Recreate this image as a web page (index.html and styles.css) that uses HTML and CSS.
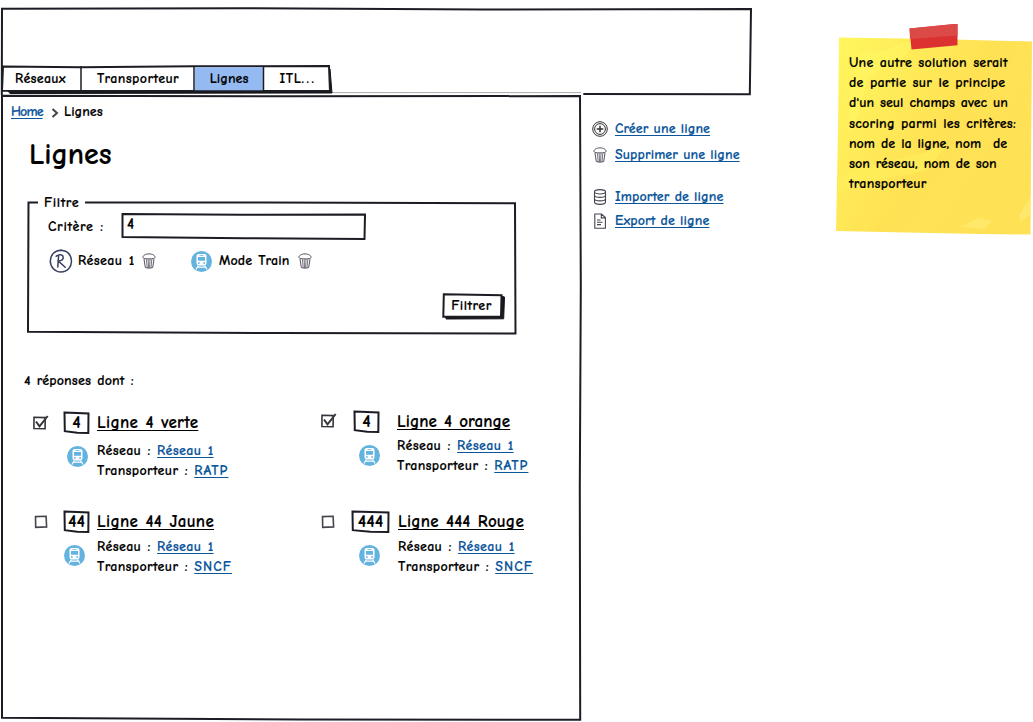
FILE: index.html
```html
<!DOCTYPE html>
<html lang="fr">
<head>
<meta charset="utf-8">
<title>Lignes</title>
<link rel="stylesheet" href="styles.css">
</head>
<body>
<svg class="defs" aria-hidden="true">
  <symbol id="train" viewBox="0 0 21 21">
    <circle cx="10.5" cy="10.5" r="10.5" fill="#64b3df"/>
    <path d="M8 3h5c1.800 0 2.500 .8 2.500 2.300v6.700c0 1.600-.9 2.400-2.500 2.400H8c-1.600 0-2.500-.8-2.500-2.400V5.300C5.500 3.800 6.300 3 8 3z" fill="#fff"/>
    <path d="M7 6.100h7v3.700H7zM7 11.200h1.700v1.500H7zM12.300 11.200H14v1.500h-1.700zM8.500 4.200h4v.8h-4z" fill="#64b3df"/>
    <path d="M7.300 14.500l-2.300 4M13.700 14.500l2.300 4M6.800 16.200h7.400" fill="none" stroke="#fff" stroke-width="1.200"/>
  </symbol>
  <symbol id="trash" viewBox="0 0 14 16">
    <g fill="none" stroke="#55505f" stroke-width="1">
      <path d="M1 4.600C.6 2.500 3.500.9 7 .9s6.300 1.500 6 3.600c-.1 1-2.600 1.400-6 1.400s-5.800-.4-6-1.300z"/>
      <path d="M2 6l1.300 8.500c2 .8 5.500.8 7.400 0L12 6"/>
      <path d="M4.400 6.200l.8 8.500M6.200 6.200l.3 8.700M8 6.200l-.4 8.700M9.800 6.200L9 14.600" stroke-width=".8"/>
    </g>
  </symbol>
  <symbol id="reseau" viewBox="0 0 24 24">
    <g fill="none" stroke="#39405f" stroke-width="1.500" stroke-linecap="round">
      <path d="M13 1.200C6 .8 1.500 5.500 1.300 12c0 6 4.500 11 10.700 11 6.400 0 10.600-5 10.500-11C22.400 6 18.500 1.300 11 1.300"/>
      <path d="M9.600 6.500L8.800 18M7.200 7.300c2.600-2.500 6.900-2.200 7 1 .1 2.400-2.300 3.500-4.800 3.700l6.800 6.200"/>
    </g>
  </symbol>
  <symbol id="checked" viewBox="0 0 17 17">
    <g fill="none" stroke="#35353b" stroke-width="1.600">
      <path d="M2 3.300l11.200.3-.1 11.200-11.200-.3z"/>
      <path d="M4 7.500l3.500 4.800L15.700 2" stroke-width="2"/>
    </g>
  </symbol>
  <symbol id="unchecked" viewBox="0 0 17 17">
    <path d="M2.500 2.600l10.600-.3.500 10.600-10.900.4z" fill="none" stroke="#45454d" stroke-width="1.600"/>
  </symbol>
</svg>

<div class="screen">
  <div class="app">
    <header class="banner">
      <svg class="frame" viewBox="0 0 753 90" preserveAspectRatio="none"><path d="M1.800 87L2 .7l240-.4 240 1.200 269-.4-1.200 85.200-166.500-.2"/><path d="M332 84.600h249" class="faint"/></svg>
      <nav class="tabs">
        <svg class="frame" viewBox="0 0 333 30" preserveAspectRatio="none"><path class="solid" d="M8 26h320l-2-23 4 1 2 24-322 .5z"/><path d="M3 1.500l78 .7 113-1 135-.1 1 25-328-.4z" fill="#fff"/><path d="M195 2.200h68v23h-68z" class="active"/><path class="divider" d="M81 1v27M194 1v27M263.500 1v27"/></svg>
        <a class="tab t1">Réseaux</a><a class="tab t2">Transporteur</a><a class="tab t3">Lignes</a><a class="tab t4">ITL<span class="dots">...</span></a>
      </nav>
    </header>
    <div class="columns">
      <main class="panel">
        <svg class="frame" viewBox="0 0 582 626" preserveAspectRatio="none"><path d="M2 -.3l290 .5 288-.1.8 190-1 200 .4 233.700L300 623.500l-298-1.800z"/></svg>
        <div class="crumbs"><a class="link home">Home</a><svg class="chevron" viewBox="0 0 8 10"><path d="M1.500 1l4.500 4-4.500 4"/></svg><span class="here">Lignes</span></div>
        <h1>Lignes</h1>
        <section class="filter">
          <svg class="frame" viewBox="0 0 490 132" preserveAspectRatio="none"><path d="M11 .6H1.500L1 129.800l250 1.200 237.500.6-.5-130.300-250-.7-180-.2"/></svg>
          <div class="legend">Filtre</div>
          <div class="criteria"><span class="label">Critère :</span>
            <div class="input"><svg class="frame" viewBox="0 0 246 27" preserveAspectRatio="none"><path d="M1.500 1l120 .8 122.500-.3-.5 24.500-120-.8L1.500 24z"/></svg>4</div>
          </div>
          <div class="tags">
            <svg class="ico-r"><use href="#reseau"/></svg><span class="tag1">Réseau 1</span><svg class="ico-trash"><use href="#trash"/></svg>
            <svg class="ico-train mode"><use href="#train"/></svg><span class="tag2">Mode Train</span><svg class="ico-trash"><use href="#trash"/></svg>
          </div>
          <div class="button"><svg class="frame" viewBox="0 0 64 27" preserveAspectRatio="none"><path class="solid" d="M4 22h55V3l3.500 1-.8 21.800L4 26z"/><path d="M1.800 1.300l57.700 1-.5 21.300-57.700.2z" fill="#fff"/></svg>Filtrer</div>
        </section>
        <p class="count">4 réponses dont :</p>
        <div class="results">
          <article class="item a">
            <svg class="check"><use href="#checked"/></svg>
            <div class="side"><div class="num"><svg class="frame" viewBox="0 0 27 23" preserveAspectRatio="none"><path d="M1.500 1.500l24 1-.2 19.500-11-.3-12.500-1.500z"/></svg>4</div><svg class="ico-train"><use href="#train"/></svg></div>
            <div class="info"><h2><a>Ligne 4 verte</a></h2><p>Réseau : <a class="link">Réseau 1</a></p><p>Transporteur : <a class="link op">RATP</a></p></div>
          </article>
          <article class="item b">
            <svg class="check"><use href="#checked"/></svg>
            <div class="side"><div class="num"><svg class="frame" viewBox="0 0 27 23" preserveAspectRatio="none"><path d="M1.500 1.500l24 1-.2 19.500-11-.3-12.500-1.500z"/></svg>4</div><svg class="ico-train"><use href="#train"/></svg></div>
            <div class="info"><h2><a>Ligne 4 orange</a></h2><p>Réseau : <a class="link">Réseau 1</a></p><p>Transporteur : <a class="link op">RATP</a></p></div>
          </article>
          <article class="item c">
            <svg class="check"><use href="#unchecked"/></svg>
            <div class="side"><div class="num"><svg class="frame" viewBox="0 0 27 23" preserveAspectRatio="none"><path d="M1.500 1.500l24 1-.2 19.500-11-.3-12.500-1.500z"/></svg>44</div><svg class="ico-train"><use href="#train"/></svg></div>
            <div class="info"><h2><a>Ligne 44 Jaune</a></h2><p>Réseau : <a class="link">Réseau 1</a></p><p>Transporteur : <a class="link op">SNCF</a></p></div>
          </article>
          <article class="item d">
            <svg class="check"><use href="#unchecked"/></svg>
            <div class="side"><div class="num wide"><svg class="frame" viewBox="0 0 39 23" preserveAspectRatio="none"><path d="M1.500 1.500l36 1-.2 19.500-18-.3-17.500-1.500z"/></svg>444</div><svg class="ico-train"><use href="#train"/></svg></div>
            <div class="info"><h2><a>Ligne 444 Rouge</a></h2><p>Réseau : <a class="link">Réseau 1</a></p><p>Transporteur : <a class="link op">SNCF</a></p></div>
          </article>
        </div>
      </main>
      <aside class="actions">
        <div class="action"><svg viewBox="0 0 16 16"><g fill="none" stroke="#333" stroke-width="1"><circle cx="8" cy="8" r="7.300"/><circle cx="8" cy="8" r="5.400"/><path d="M8 4.700v6.600M4.700 8h6.600" stroke-width="1.500"/></g></svg><a class="link">Créer une ligne</a></div>
        <div class="action"><svg viewBox="-1 0 16 16"><use href="#trash" width="14" height="16"/></svg><a class="link">Supprimer une ligne</a></div>
        <div class="action gap"><svg viewBox="0 0 16 16"><g fill="none" stroke="#454550" stroke-width="1.100"><ellipse cx="8" cy="2.800" rx="5.500" ry="2.200"/><path d="M2.500 2.800v10.400c.5 2.900 10.500 2.900 11 0V2.800M2.500 6.300c.5 2.700 10.500 2.700 11 0M2.500 9.800c.5 2.700 10.500 2.700 11 0"/></g></svg><a class="link">Importer de ligne</a></div>
        <div class="action last"><svg viewBox="0 0 16 16"><path d="M2.800 1h6.700l3.900 3.600v10.600H2.800zM9.300 1v3.900h4M5 7h3.500M5 9.300h5.500M5 11.600h4" fill="none" stroke="#454550" stroke-width="1.100"/></svg><a class="link">Export de ligne</a></div>
      </aside>
    </div>
  </div>
  <aside class="note">
    <svg class="paper" viewBox="0 0 197 212">
      <defs><linearGradient id="g" x1="0" y1="0" x2="1" y2=".6"><stop offset="0" stop-color="#fff75e"/><stop offset=".35" stop-color="#ffea58"/><stop offset=".6" stop-color="#ffe254"/><stop offset="1" stop-color="#ffe156"/></linearGradient></defs>
      <path d="M3 13.500l97 1.500 96 2.500-.5 60-1 133-50-.5L70 208.500 0 207l2-100z" fill="url(#g)"/>
      <path d="M24 29l24-2 20-9 12 1-18 20-30 13-10 40-10 20 2-50z" fill="#fffb68" opacity=".35"/>
      <path d="M2 155l25-12 60-14 25-9-22 27-50 9-38 13z" fill="#fff25a" opacity=".5"/>
      <path d="M125 203l17-9 14 3-8 8zM183 192l12-20v18l-10 8z" fill="#ffed78" opacity=".6"/>
      <path d="M73.500 4.500L121.500 -.3v21.500L75.500 25.500z" fill="#dc3131"/><path d="M73.500 4.500L121.500 -.3v11.800l-47.500 3.500z" fill="#dc4a47"/>
    </svg>
    <p>Une autre solution serait</p><p>de partie sur le principe</p><p class="tight">d'un seul champs avec un</p><p>scoring parmi les critères:</p><p class="tight">nom de la ligne, nom&nbsp; de</p><p class="tight">son réseau, nom de son</p><p>transporteur</p>
  </aside>
</div>
</body>
</html>
```
FILE: styles.css
```css
* { box-sizing: border-box; }
body {
  margin: 0;
  background: #fff;
  color: #000;
  font: 700 14px/20px "Comic Neue", "Comic Sans MS", Lato, sans-serif;
  letter-spacing: .25px;
  word-spacing: 1px;
  -webkit-text-stroke: .15px currentColor;
}
p, h1, h2 { margin: 0; font-weight: inherit; }
.defs { display: block; width: 0; height: 0; }
.screen { display: flex; width: 1033px; height: 722px; padding-top: 8px; overflow: hidden; white-space: nowrap; }
.app { width: 753px; flex: none; }

/* hand-drawn outlines behind each box */
.frame { position: absolute; left: 0; top: 0; width: 100%; height: 100%; z-index: -1; overflow: visible; }
.frame path { fill: none; stroke: #1c1d24; stroke-width: 2; }
.frame .solid { fill: #16171b; stroke: #16171b; stroke-width: 1; }
.frame path[fill] { fill: #fff; }
.frame .active { fill: #95baf2; stroke: none; }
.frame .divider { stroke-width: 1.5; }
.frame .faint { stroke: #aaa; stroke-width: 1; }
.banner, .panel, .tabs, .filter, .input, .button, .num { position: relative; z-index: 0; }

.banner { height: 88px; padding-top: 57px; }
.banner > .frame { height: 90px; }
.tabs { display: flex; width: 333px; height: 30px; padding-top: 4px; }
.tab { text-align: center; height: 20px; }
.t1 { width: 81px; }
.t2 { width: 114px; letter-spacing: .4px; }
.t3 { width: 68px; letter-spacing: 0; }
.t4 { width: 70px; letter-spacing: .6px; }
.dots { letter-spacing: 2.4px; }

.columns { display: flex; }
.panel { width: 582px; height: 626px; padding-top: 6px; flex: none; }
.link { color: #0a559b; }
.link, h2 a { text-decoration: underline; text-underline-offset: 2px; text-decoration-thickness: 1px; text-decoration-skip-ink: none; }
.crumbs { display: flex; align-items: center; padding-left: 11px; height: 20px; }
.home { width: 40px; letter-spacing: -.9px; }
.here { letter-spacing: 0; }
.chevron { width: 8px; height: 10px; margin: 2px 5px 0 0; fill: none; stroke: #45464d; stroke-width: 2; }
h1 { font-size: 30px; line-height: 36px; letter-spacing: -.1px; margin: 15px 0 0 29px; }

.filter { width: 490px; height: 132px; margin: 29px 0 0 27px; }
.legend { position: absolute; left: 17px; top: -9px; letter-spacing: .6px; }
.criteria { display: flex; padding: 11px 0 0 20px; }
.label { width: 74px; padding: 4px 0 0 1px; letter-spacing: .7px; }
.input { width: 246px; height: 27px; padding: 1px 0 0 6px; font-size: 15px; }
.tags { display: flex; align-items: center; height: 24px; margin: 9px 0 0 22px; }
.tags span { height: 21px; }
.ico-r { width: 24px; height: 24px; margin-right: 5px; }
.tag1 { width: 64px; letter-spacing: .35px; }
.tag2 { width: 79px; letter-spacing: .1px; }
.ico-trash { width: 14px; height: 16px; }
.ico-train { display: block; width: 21px; height: 21px; }
.mode { margin: 0 7px 0 35px; }
.button { width: 64px; height: 27px; margin: 20px 0 0 415px; padding-top: 3px; text-align: center; padding-right: 5px; letter-spacing: .5px; }

.count { margin: 37px 0 0 24px; letter-spacing: .15px; }
.results { display: grid; grid-template-columns: 289px 290px; grid-template-rows: 100px 100px; margin-top: 20px; }
.item { display: flex; padding-left: 32px; }
.check { width: 17px; height: 17px; margin: 3px 14px 0 0; flex: none; }
.side { width: 34px; flex: none; }
.num { width: 27px; height: 23px; font-size: 18px; line-height: 23px; text-align: center; letter-spacing: 0; }
.side .ico-train { margin: 12px 0 0 4px; }
.info h2 { font-size: 17px; line-height: 22px; height: 22px; padding-top: 1px; margin-bottom: 8px; letter-spacing: .3px; }
.info p { letter-spacing: .33px; }
.info .link { letter-spacing: .35px; }
.info .op { letter-spacing: 1.1px; }
.b { padding-left: 31px; }
.b .check { margin: 1px 16px 0 0; }
.b .num { margin-top: -1px; }
.b .side { width: 44px; }
.b .side .ico-train { margin-left: 6px; }
.b .info h2 { margin: -1px 0 4px; letter-spacing: .05px; }
.c .side .ico-train { margin: 12px 0 0 1px; }
.c .info h2, .d .info h2 { margin: -1px 0 5px; }
.d .info h2 { letter-spacing: .2px; }
.c .num, .d .num { margin-top: -1px; }
.d { padding-left: 31px; }
.d .check { margin-right: 14px; }
.c .check { margin-left: 1px; margin-right: 13px; }
.d .side { width: 47px; }
.d .num { width: 39px; }
.d .side .ico-train { margin: 12px 0 0 8px; }

.actions { padding: 23px 0 0 10px; }
.action { display: flex; align-items: center; height: 20px; margin-bottom: 6px; word-spacing: 0; letter-spacing: .1px; }
.action svg { width: 16px; height: 16px; margin: 0 7px 0 0; }
.gap { margin-top: 22px; }
.last { margin-top: -2px; }

.note { position: relative; z-index: 0; width: 197px; height: 212px; margin: 16px 0 0 83px; padding: 29px 0 0 13px; }
.note p { height: 20.2px; }
.note .tight { letter-spacing: 0; }
.paper { position: absolute; left: 0; top: 0; width: 197px; height: 212px; z-index: -1; }
```
